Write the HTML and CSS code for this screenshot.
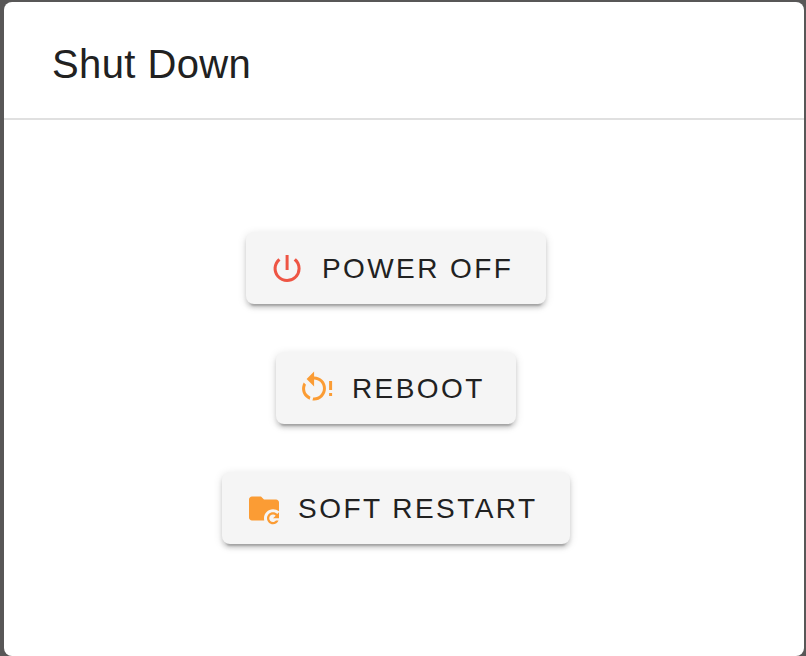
FILE: index.html
```html
<!DOCTYPE html>
<html lang="en">
<head>
<meta charset="utf-8">
<title>Shut Down</title>
<link rel="stylesheet" href="styles.css">
</head>
<body>
<main class="dialog">
  <header class="title"><h1>Shut Down</h1></header>
  <div class="actions">
    <button class="btn power"><svg class="icon red" viewBox="0 0 24 24"><path transform="translate(-.6 -.3)" d="M13,3H11V13H13V3M17.83,5.17L16.41,6.59C18.05,7.91 19,9.9 19,12A7,7 0 0,1 12,19C8.14,19 5,15.88 5,12C5,9.91 5.95,7.91 7.58,6.58L6.17,5.17C2.38,8.39 1.92,14.07 5.14,17.86C8.36,21.64 14.04,22.1 17.83,18.88C19.85,17.17 21,14.65 21,12C21,9.37 19.84,6.87 17.83,5.17Z"/></svg><span>POWER OFF</span></button>
    <button class="btn reboot"><svg class="icon" viewBox="0 0 24 24"><g transform="translate(-.6 -.3)"><path transform="translate(-2 0)" d="M12,4C14.1,4 16.1,4.8 17.6,6.3C20.7,9.4 20.7,14.5 17.6,17.6C15.8,19.5 13.3,20.2 10.9,19.9L11.4,17.9C13.1,18.1 14.9,17.5 16.2,16.2C18.5,13.9 18.5,10.1 16.2,7.7C15.1,6.6 13.5,6 12,6V10.6L7,5.6L12,0.6V4M6.3,17.6C3.7,15 3.3,11 5.1,7.9L6.6,9.4C5.5,11.6 5.9,14.4 7.8,16.2C8.3,16.7 8.9,17.1 9.6,17.4L9,19.4C8,19 7.1,18.4 6.3,17.6Z"/><path d="M20 7H22V13H20ZM20 15H22V17H20Z"/></g></svg><span>REBOOT</span></button>
    <button class="btn soft"><svg class="icon" viewBox="0 0 24 24"><path transform="translate(0 -.3)" d="M18 14.5C19.11 14.5 20.11 14.95 20.83 15.67L22 14.5V18.5H18L19.77 16.73C19.32 16.28 18.69 16 18 16C16.62 16 15.5 17.12 15.5 18.5C15.5 19.88 16.62 21 18 21C18.82 21 19.54 20.61 20 20H21.71C21.12 21.47 19.68 22.5 18 22.5C15.79 22.5 14 20.71 14 18.5C14 16.29 15.79 14.5 18 14.5M20 6C21.11 6 22 6.89 22 8V13.81C20.88 12.97 19.5 12.5 18 12.5C14.69 12.5 12 15.19 12 18.5C12 19 12.06 19.5 12.18 20H4C2.89 20 2 19.1 2 18V6C2 4.89 2.89 4 4 4H10L12 6H20Z"/></svg><span>SOFT RESTART</span></button>
  </div>
</main>
</body>
</html>
```
FILE: styles.css
```css
* { box-sizing: border-box; }
body {
  margin: 0;
  height: 656px;
  padding: 2px 2px 0 4px;
  background: #585757;
  font-family: "Liberation Sans", Arial, sans-serif;
  color: #212121;
  overflow: hidden;
}
.dialog {
  height: 654px;
  background: #fff;
  border-radius: 8px;
  overflow: hidden;
}
.title {
  height: 118px;
  padding: 0 48px;
  display: flex;
  align-items: center;
  border-bottom: 2px solid #e0e0e0;
}
h1 {
  margin: 8px 0 0;
  font-size: 40px;
  line-height: 64px;
  font-weight: 400;
  letter-spacing: 0.4px;
}
.actions {
  display: flex;
  flex-direction: column;
  align-items: center;
  gap: 48px;
  padding: 112px 16px 0 0;
}
.btn {
  display: flex;
  align-items: center;
  height: 72px;
  padding: 1px 0 0 32px;
  border: 0;
  border-radius: 8px;
  background: #f5f5f5;
  color: #212121;
  font: 400 28px/72px "Liberation Sans", Arial, sans-serif;
  letter-spacing: 2.4px;
  white-space: nowrap;
  box-shadow: 0 6px 2px -4px rgba(0,0,0,.2), 0 4px 4px rgba(0,0,0,.14), 0 2px 10px rgba(0,0,0,.12);
}
.power { width: 300px; }
.reboot { width: 240px; }
.soft { width: 348px; letter-spacing: 2.46px; }
.icon {
  width: 36px;
  height: 36px;
  margin: 0 16px 0 -8px;
  fill: #fb9c34;
}
.icon.red { fill: #ee5544; }
```
